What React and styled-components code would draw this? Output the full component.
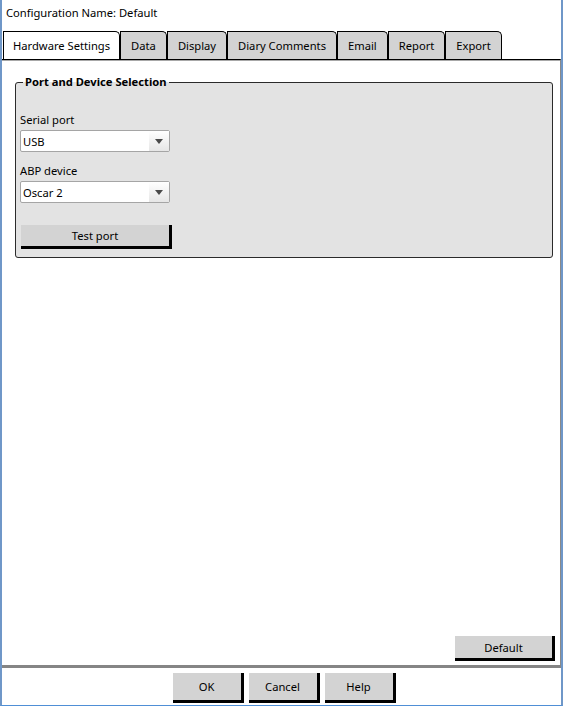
import React from "react";
import styled, { createGlobalStyle } from "styled-components";

const GlobalStyle = createGlobalStyle`
  html, body {
    margin: 0;
    padding: 0;
    background: #ffffff;
  }
  body {
    font-family: "Noto Sans", "DejaVu Sans", sans-serif;
    font-size: 11.2px;
    color: #000000;
  }
`;

const Window = styled.div`
  box-sizing: border-box;
  width: 563px;
  height: 706px;
  display: flex;
  flex-direction: column;
  background: #ffffff;
  border-left: 2px solid #6f97c8;
  border-right: 2px solid #6f97c8;
  border-bottom: 1px solid #4f8fd6;
`;

const Title = styled.div`
  height: 31px;
  box-sizing: border-box;
  padding: 4px 0 0 4px;
  line-height: 18px;
`;

const TabBar = styled.div`
  display: flex;
  align-items: flex-end;
  height: 28px;
  padding-left: 1px;
`;

const Tab = styled.div`
  box-sizing: border-box;
  height: 28px;
  padding: 0 ${(p) => (p.$active ? 9 : 10)}px;
  display: flex;
  align-items: center;
  border: 1px solid #000000;
  border-bottom: none;
  border-top-right-radius: 5px;
  background: ${(p) => (p.$active ? "#ffffff" : "#d3d3d3")};
  white-space: nowrap;
`;

const Panel = styled.div`
  flex: 1;
  display: flex;
  flex-direction: column;
  justify-content: space-between;
  border-top: 1px solid #000000;
  border-right: 1px solid #8a8a8a;
  border-bottom: 3px solid #858585;
  box-shadow: inset 0 1px 0 #a8a8a8;
  padding: 15px 5px 4px 13px;
`;

const GroupBox = styled.fieldset`
  margin: 0 2px 0 0;
  padding: 24px 0 8px 4px;
  border: 1px solid #2b2b2b;
  border-radius: 3px;
  background: #e3e3e3;
  box-shadow: 1px 1px 0 #ffffff;
`;

const Legend = styled.legend`
  padding: 0 2px;
  margin-left: 3px;
  font-weight: bold;
  line-height: 14px;
`;

const Field = styled.div`
  display: flex;
  flex-direction: column;
  margin-bottom: 12px;
`;

const Label = styled.div`
  line-height: 14px;
  margin-bottom: 3px;
`;

const Select = styled.div`
  box-sizing: border-box;
  width: 150px;
  height: 22px;
  display: flex;
  align-items: center;
  justify-content: space-between;
  background: #ffffff;
  border: 1px solid #a5a5a5;
  border-radius: 2px;
  padding-left: 2px;
`;

const Arrow = styled.span`
  width: 20px;
  height: 20px;
  display: flex;
  align-items: center;
  justify-content: center;
  background: linear-gradient(#ffffff, #e6e6e6);
`;

const Button = styled.div`
  box-sizing: border-box;
  width: ${(p) => p.$width}px;
  height: ${(p) => p.$height || 25}px;
  display: flex;
  align-items: center;
  justify-content: center;
  background: #d3d3d3;
  border-right: 3px solid #000000;
  border-bottom: 3px solid #000000;
`;

const TestRow = styled.div`
  margin-top: 22px;
  padding-left: 1px;
`;

const PanelFooter = styled.div`
  display: flex;
  justify-content: flex-end;
`;

const BottomBar = styled.div`
  height: 37px;
  display: flex;
  justify-content: center;
  align-items: flex-start;
  gap: 5px;
  padding-top: 5px;
  box-sizing: border-box;
  margin-left: 5px;
`;

const DropArrow = () => (
  <svg width="8" height="5" viewBox="0 0 8 5">
    <path d="M0 0 L8 0 L4 5 Z" fill="#4a4a4a" />
  </svg>
);

const tabs = [
  "Hardware Settings",
  "Data",
  "Display",
  "Diary Comments",
  "Email",
  "Report",
  "Export",
];

const fields = [
  { label: "Serial port", value: "USB" },
  { label: "ABP device", value: "Oscar 2" },
];

export default function App() {
  return (
    <>
      <GlobalStyle />
      <Window>
        <Title>Configuration Name: Default</Title>
        <TabBar>
          {tabs.map((t, i) => (
            <Tab key={t} $active={i === 0}>
              {t}
            </Tab>
          ))}
        </TabBar>
        <Panel>
          <GroupBox>
            <Legend>Port and Device Selection</Legend>
            {fields.map((f) => (
              <Field key={f.label}>
                <Label>{f.label}</Label>
                <Select>
                  <span>{f.value}</span>
                  <Arrow>
                    <DropArrow />
                  </Arrow>
                </Select>
              </Field>
            ))}
            <TestRow>
              <Button $width={151} $height={24}>
                Test port
              </Button>
            </TestRow>
          </GroupBox>
          <PanelFooter>
            <Button $width={100}>Default</Button>
          </PanelFooter>
        </Panel>
        <BottomBar>
          <Button $width={71} $height={30}>
            OK
          </Button>
          <Button $width={71} $height={30}>
            Cancel
          </Button>
          <Button $width={71} $height={30}>
            Help
          </Button>
        </BottomBar>
      </Window>
    </>
  );
}
